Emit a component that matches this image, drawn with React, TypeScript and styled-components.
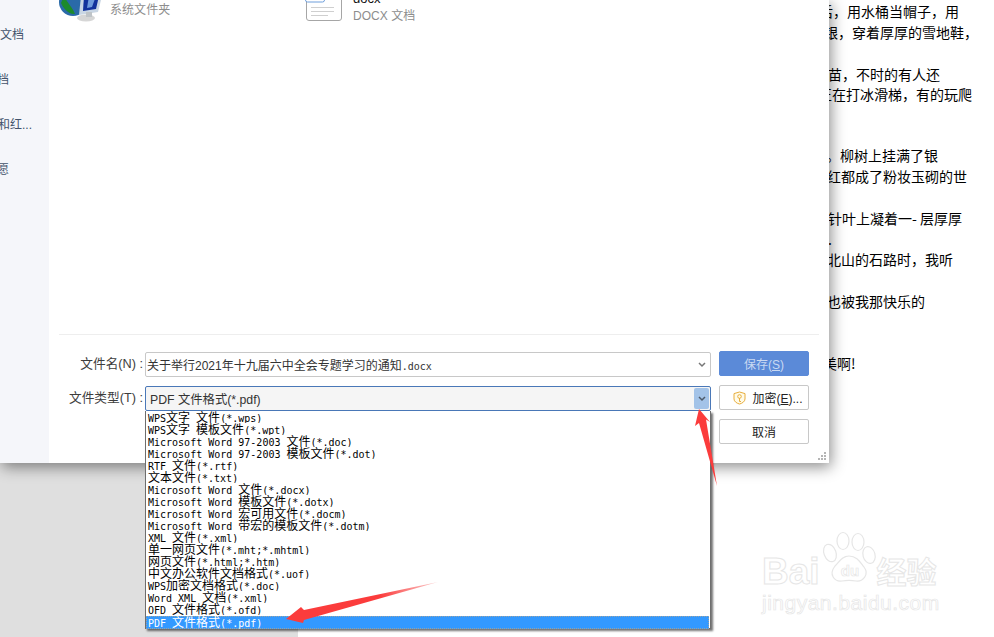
import React from 'react';
import styled, { createGlobalStyle } from 'styled-components';

const Global = createGlobalStyle`
  html, body { margin: 0; padding: 0; background: #fff; overflow: hidden; }
  * { box-sizing: border-box; }
`;
const CJK = '"Noto Sans CJK SC", sans-serif';
const Page = styled.div`
  position: relative; width: 994px; height: 637px; overflow: hidden;
  display: flex; font-family: "Liberation Sans", ${CJK};
`;
const Desk = styled.div`width: 298px; height: 100%; background: #dfdfdf; flex: none;`;
const Doc = styled.div`
  flex: 1; background: #fff; padding-top: 1px; color: #000;
  font-family: ${CJK}; font-size: 14px; white-space: nowrap; overflow: hidden;
`;
const Line = styled.div<{ $x: number; $top: number }>`
  height: 21px; line-height: 21px; margin-left: ${p => p.$x}px; margin-top: ${p => p.$top}px;
`;
const Dialog = styled.div`
  position: absolute; left: 0; top: 0; width: 829px; height: 463px; background: #fff;
  box-shadow: 2px 4px 14px rgba(0,0,0,.45); display: flex;
`;
const Side = styled.div`
  width: 49px; flex: none; background: #f5f6fa; padding-top: 25px; overflow: hidden;
  color: #43536b; font-size: 12px; font-family: "Liberation Sans", ${CJK};
`;
const SideItem = styled.div<{ $x: number }>`
  height: 45px; line-height: 20px; margin-left: ${p => p.$x}px; white-space: nowrap;
`;
const Main = styled.div`flex: 1; display: flex; flex-direction: column; min-width: 0;`;
const Files = styled.div`
  flex: none; height: 335px; margin-right: 10px; margin-left: 10px; border-bottom: 1px solid #eeeeee;
  display: flex; align-items: flex-start; overflow: hidden;
`;
const FileItem = styled.div<{ $w: number; $gap: number }>`
  width: ${p => p.$w}px; display: flex; gap: ${p => p.$gap}px; flex: none;
`;
const FileText = styled.div`display: flex; flex-direction: column; font-size: 12px; color: #8d8d8d;`;
const FileName = styled.div`color: #111; font-size: 13px; line-height: 15px; margin-top: -9px;`;
const FileType = styled.div`line-height: 16px; margin-top: 2px; letter-spacing: .05px;`;
const Form = styled.div`
  padding: 16px 20px 0 10px; display: grid; row-gap: 9px; column-gap: 8px;
  grid-template-columns: 78px 566px 90px; grid-auto-rows: 25px; justify-content: start; position: relative;
`;
const Label = styled.div`
  font-size: 12.7px; color: #3d3d3d; text-align: right; line-height: 25px; white-space: nowrap;
  margin-right: -6px; margin-top: 1px;
`;
const Combo = styled.div<{ $focus?: boolean }>`
  display: flex; align-items: center; justify-content: space-between; height: 25px; white-space: nowrap;
  margin-top: 1px;
  border: 1px solid ${p => (p.$focus ? '#4a78b8' : '#c8c8c8')}; border-radius: 2px;
  background: ${p => (p.$focus ? '#f5f5f5' : '#fff')};
  padding-left: ${p => (p.$focus ? 4 : 1)}px; font-size: ${p => (p.$focus ? 12.3 : 12)}px; color: #333;
`;
const Mono = styled.span`font-family: "DejaVu Sans Mono", monospace; font-size: 10px;`;
const Arrow = styled.div<{ $on?: boolean }>`
  width: 15px; height: 21px; margin-right: 1px; border-radius: 2px; display: flex; align-items: center; justify-content: center;
  background: ${p => (p.$on ? '#a3c3e8' : 'transparent')}; color: ${p => (p.$on ? '#4d5a6a' : '#777')};
`;
const Btn = styled.div<{ $primary?: boolean; $pad?: number }>`
  height: 25px; border-radius: 2px; font-size: 12px; display: flex; align-items: center; justify-content: center; gap: 6px;
  padding-left: ${p => p.$pad ?? 0}px;
  background: ${p => (p.$primary ? '#5b8ad8' : '#fff')}; color: ${p => (p.$primary ? '#c9d9f2' : '#222')};
  border: 1px solid ${p => (p.$primary ? '#5b8ad8' : '#c8c8c8')};
`;
const Grip = styled.svg`position: absolute; right: 2px; bottom: 2px;`;
const List = styled.div`
  position: absolute; left: 145px; top: 411px; width: 566px; height: 218px; background: #fff;
  border: 1px solid #6e6e6e; border-top: 0; box-shadow: 2px 2px 2px rgba(0,0,0,.55); padding: 0 1px 0 0;
`;
const Row = styled.div<{ $sel?: boolean }>`
  height: ${p => (p.$sel ? 13 : 12)}px; line-height: 12px; padding-left: 2px; white-space: nowrap; font-size: 12px; overflow: hidden;
  font-family: "DejaVu Sans Mono", monospace; color: ${p => (p.$sel ? '#fff' : '#000')};
  background: ${p => (p.$sel ? '#3399ff' : 'transparent')};
  margin-top: ${p => (p.$sel ? 1 : 0)}px;
  outline: ${p => (p.$sel ? '1px dotted rgba(220,170,110,.6)' : 'none')}; outline-offset: -1px;
`;
const RowLatin = styled.span`font-size: 10px;`;
const RowCjk = styled.span`font-family: ${CJK}; font-size: 12px;`;
const Over = styled.svg`position: absolute; left: 0; top: 0; pointer-events: none;`;
const Mark = styled.div`
  position: absolute; left: 762px; top: 552px; width: 180px; color: #fff;
  -webkit-text-stroke: 1px #e6e6e6; font-family: "Liberation Sans", ${CJK};
`;
const MarkTop = styled.div`font-size: 37px; line-height: 40px; font-weight: 700; display: flex; align-items: flex-end; white-space: nowrap;`;
const MarkSub = styled.div`font-size: 21px; line-height: 22px; letter-spacing: .5px; white-space: nowrap; -webkit-text-stroke: .7px #e6e6e6;`;
const MarkCn = styled.span`font-size: 30px; line-height: 38px; margin-left: 57px; letter-spacing: 0;`;
const Paw = styled.svg`position: absolute; left: 60px; top: -21px;`;

const rows = [
  'WPS文字 文件(*.wps)', 'WPS文字 模板文件(*.wpt)', 'Microsoft Word 97-2003 文件(*.doc)',
  'Microsoft Word 97-2003 模板文件(*.dot)', 'RTF 文件(*.rtf)', '文本文件(*.txt)',
  'Microsoft Word 文件(*.docx)', 'Microsoft Word 模板文件(*.dotx)', 'Microsoft Word 宏可用文件(*.docm)',
  'Microsoft Word 带宏的模板文件(*.dotm)', 'XML 文件(*.xml)', '单一网页文件(*.mht;*.mhtml)',
  '网页文件(*.html;*.htm)', '中文办公软件文档格式(*.uof)', 'WPS加密文档格式(*.doc)',
  'Word XML 文档(*.xml)', 'OFD 文件格式(*.ofd)', 'PDF 文件格式(*.pdf)',
];
const split = (s: string) => s.split(/([\u4e00-\u9fff]+)/).filter(Boolean).map((t, i) =>
  /[\u4e00-\u9fff]/.test(t) ? <RowCjk key={i}>{t}</RowCjk> : <RowLatin key={i}>{t}</RowLatin>);

const lines: [string, number, number][] = [
  ['后，用水桶当帽子，用', 521, 0], ['银，穿着厚厚的雪地鞋，', 526, 0],
  ['苗，不时的有人还', 530, 21], ['正在打冰滑梯，有的玩爬', 520, -1],
  ['。柳树上挂满了银', 528, 40], ['红都成了粉妆玉砌的世', 529, 0],
  ['针叶上凝着一- 层厚厚', 530, 21], ['.', 530, 0], ['北山的石路时，我听', 529, -1],
  ['也被我那快乐的', 529, 21], ['美啊!', 525, 41],
];
const sides: [string, number][] = [['文档', 0], ['档', -3], ['和红...', -2], ['愿', -3]];
const Chevron = () => (
  <svg width="8" height="6" viewBox="0 0 8 6"><path d="M1 1l3 3 3-3" fill="none" stroke="currentColor" strokeWidth="1.5" /></svg>
);

export default function App() {
  return (
    <Page>
      <Global />
      <Desk />
      <Doc>
        {lines.map(([t, x, top], i) => <Line key={i} $x={x} $top={top}>{t}</Line>)}
      </Doc>
      <Dialog>
        <Side>
          {sides.map(([t, x]) => <SideItem key={t} $x={x}>{t}</SideItem>)}
        </Side>
        <Main>
          <Files>
            <FileItem $w={246} $gap={9}>
              <svg width="42" height="23" viewBox="0 0 42 23">
                <circle cx="14" cy="2" r="14" fill="#2a6aa8" />
                <path d="M5 -4 C 9 4 14 8 16 14 C 10 15 4 8 2 3Z" fill="#1c8a2c" />
                <path d="M22 -4 L43 -4 L39 12 L20 15Z" fill="#c9d6e4" />
                <path d="M25 -4 L40 -4 L37 9 L24 11Z" fill="#12329c" />
                <path d="M30 -4 L37 -4 L33 7 L28 8Z" fill="#6f9bdc" />
                <ellipse cx="27" cy="18" rx="9" ry="3.5" fill="#d6d6d6" />
                <path d="M27 12h6v5h-6z" fill="#bfc4c8" />
              </svg>
              <FileText>
                <FileType>系统文件夹</FileType>
              </FileText>
            </FileItem>
            <FileItem $w={200} $gap={10}>
              <svg width="38" height="22" viewBox="0 0 38 22">
                <path d="M1.500 -6H36.500V18a2.500 2.500 0 0 1-2.500 2.500H4A2.500 2.500 0 0 1 1.500 18Z" fill="#fff" stroke="#a6a6a6" />
                <rect x="0.500" y="-6" width="19" height="8" rx="2" fill="#fff" stroke="#6f9fdc" />
                <path d="M6 7.500h23M6 11.500h23M6 15.500h17" stroke="#cfcfcf" fill="none" />
              </svg>
              <FileText>
                <FileName>docx</FileName>
                <FileType>DOCX 文档</FileType>
              </FileText>
            </FileItem>
          </Files>
          <Form>
            <Label>文件名(N) :</Label>
            <Combo>
              <span>关于举行2021年十九届六中全会专题学习的通知<Mono>.docx</Mono></span>
              <Arrow><Chevron /></Arrow>
            </Combo>
            <Btn $primary><span>保存(<u>S</u>)</span></Btn>
            <Label>文件类型(T) :</Label>
            <Combo $focus>
              <span>PDF 文件格式(*.pdf)</span>
              <Arrow $on><Chevron /></Arrow>
            </Combo>
            <Btn $pad={8}>
              <svg width="13" height="14" viewBox="0 0 13 14">
                <path d="M6.500 1 L12 2.600 V8 C12 10.500 9 12.500 6.500 13 C4 12.500 1 10.500 1 8 V2.600 Z" fill="#fffbe9" stroke="#e8ad3c" />
                <circle cx="6.500" cy="5.500" r="1.800" fill="none" stroke="#e8ad3c" />
                <path d="M6.500 7v3.500h1.500" fill="none" stroke="#e8ad3c" />
              </svg>
              <span>加密(<u>E</u>)...</span>
            </Btn>
            <span />
            <span />
            <Btn>取消</Btn>
          </Form>
        </Main>
        <Grip width="9" height="9" viewBox="0 0 9 9">
          <path d="M6 0h2v2H6zM3 3h2v2H3zM6 3h2v2H6zM0 6h2v2H0zM3 6h2v2H3zM6 6h2v2H6z" fill="#b5b5b5" />
        </Grip>
      </Dialog>
      <List>
        {rows.map((r, i) => <Row key={i} $sel={i === rows.length - 1}>{split(r)}</Row>)}
      </List>
      <Over width="994" height="637" viewBox="0 0 994 637">
        <defs>
          <linearGradient id="tail" x1="438" y1="582" x2="380" y2="596" gradientUnits="userSpaceOnUse">
            <stop offset="0" stopColor="#fbd0d0" />
            <stop offset="1" stopColor="#fb3c3c" />
          </linearGradient>
        </defs>
        <path d="M699 409 L710 422 L706 419.500 L717 486 L699 423 L695 426Z" fill="#fb3c3c" />
        <path d="M438 582 L304 610 L301 607 L286 619 L303 623 L304 620Z" fill="url(#tail)" />
      </Over>
      <Mark>
        <MarkTop>Bai<MarkCn>经验</MarkCn></MarkTop>
        <MarkSub>jingyan.baidu.com</MarkSub>
        <Paw width="56" height="56" viewBox="0 0 56 56">
          <g fill="#fff" stroke="#e6e6e6" strokeWidth="1.200">
            <ellipse cx="8" cy="22" rx="6" ry="9" transform="rotate(-20 8 22)" />
            <ellipse cx="21" cy="10" rx="6" ry="8.500" />
            <ellipse cx="36" cy="11" rx="6" ry="8.500" />
            <ellipse cx="47" cy="24" rx="6" ry="8.500" transform="rotate(-15 47 24)" />
            <path d="M27 25c8 0 11 6 15 11 6 8-2 15-8 14-5-1-9-1-14 0-7 1-14-6-7-15 4-4 7-10 14-10z" />
          </g>
          <text x="28" y="45" textAnchor="middle" fontSize="15" fontWeight="700" fill="#fff" stroke="#e6e6e6" strokeWidth=".7">du</text>
        </Paw>
      </Mark>
    </Page>
  );
}
